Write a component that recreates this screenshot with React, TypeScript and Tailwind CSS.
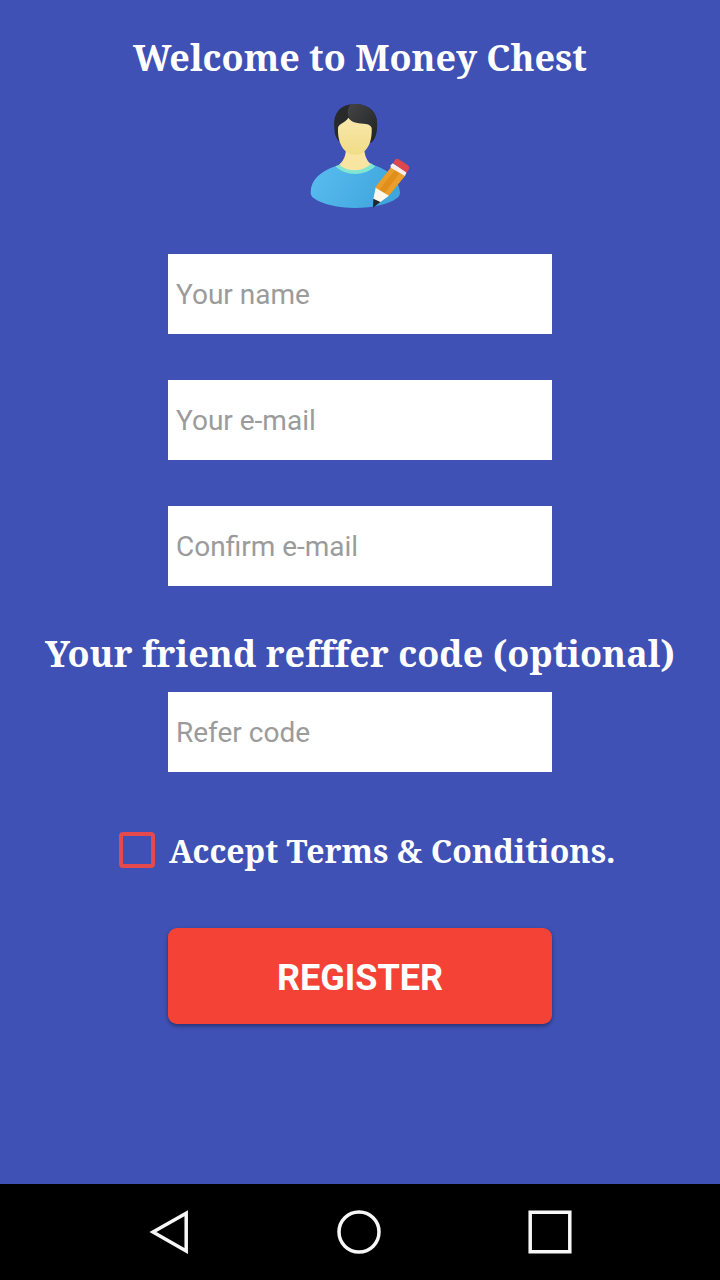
import { useState } from 'react';

const headingFont = "font-['Noto_Serif','DejaVu_Serif',serif] font-bold";

interface FieldProps {
  placeholder: string;
  type?: string;
}

function Field({ placeholder, type = 'text' }: FieldProps) {
  return (
    <input
      type={type}
      placeholder={placeholder}
      className="block w-96 h-20 shrink-0 bg-white px-2 pt-px text-[28px] text-gray-800 placeholder:text-[#9b9b9b] focus:outline-none"
    />
  );
}

function UserEditIcon() {
  return (
    <svg className="w-[100px] h-[108px] shrink-0" viewBox="60 36 300 324">
      <defs>
        <linearGradient id="shirt" x1="0" y1="0" x2="1" y2="0.3">
          <stop offset="0" stopColor="#5bbdf1" />
          <stop offset="1" stopColor="#3fa6dc" />
        </linearGradient>
        <linearGradient id="face" x1="0" y1="0" x2="0" y2="1">
          <stop offset="0" stopColor="#f9e8ad" />
          <stop offset="1" stopColor="#f1dc86" />
        </linearGradient>
        <linearGradient id="hair" x1="0" y1="0" x2="1" y2="1">
          <stop offset="0" stopColor="#444444" />
          <stop offset="1" stopColor="#222326" />
        </linearGradient>
      </defs>

      {/* Body */}
      <path d="M136 229 C92 244 62 270 62 308 Q62 318 72 325 C96 343 144 354 196 354 C248 354 296 343 320 325 Q330 318 330 308 C328 270 296 240 253 226 Z" fill="url(#shirt)" />
      <path d="M136 229 L147 224 C174 244 216 244 243 220 L256 229 C224 259 167 260 136 229 Z" fill="#80e5d1" />
      <path d="M168 180 C166 202 158 216 147 224 C174 247 216 247 243 222 C232 214 225 201 223 180 Z" fill="#f8e5a2" />

      {/* Head */}
      <path d="M133 112 C130 70 148 43 196 42 C244 43 265 73 261 109 C260 136 254 150 244 158 L146 153 C139 146 133 132 133 112 Z" fill="#28292b" />
      <path d="M181 43 C171 57 170 75 181 88 L247 151 C262 134 264 104 259 84 C248 51 214 38 181 43 Z" fill="url(#hair)" />
      <path d="M175 83 C188 101 208 99 228 102 C238 104 243 108 245 114 C247 160 229 194 195 194 C161 194 142 157 144 113 C147 100 167 98 175 83 Z" fill="url(#face)" />

      {/* Pencil */}
      <path d="M304 231 L345 257 L296 317 L255 293 Z" fill="#e08e1c" />
      <path d="M304 231 L316 239 L267 300 L255 293 Z" fill="#eb9d2c" />
      <path d="M331 247 L345 257 L296 317 L284 309 Z" fill="#ec9f28" />
      <path d="M257 293 L297 317 L270 337 L250 327 Z" fill="#fff7e8" />
      <path d="M250 326 L271 336 L249 353 Z" fill="#242629" />
      <path d="M302 226 L308 220 L350 246 L345 258 L302 233 Z" fill="#f7eeee" />
      <path d="M309 219 L315 209 Q319 205 325 207 L353 225 Q360 230 357 237 L350 248 Z" fill="#e0464e" />
    </svg>
  );
}

function NavigationBar() {
  return (
    <nav className="flex h-24 w-full shrink-0 items-center justify-between bg-black pl-[149px] pr-[148px] text-[#f7f7f7]">
      <button aria-label="Back">
        <svg className="block w-10 h-11" viewBox="0 0 40 44" fill="none" stroke="currentColor" strokeWidth="3.5">
          <path d="M37.2 3.2 V41 L4 22.1 Z" />
        </svg>
      </button>
      <button aria-label="Home">
        <svg className="block w-11 h-11" viewBox="0 0 44 44" fill="none" stroke="currentColor" strokeWidth="3.5">
          <circle cx="22" cy="22" r="20" />
        </svg>
      </button>
      <button aria-label="Recent apps">
        <svg className="block w-11 h-11" viewBox="0 0 44 44" fill="none" stroke="currentColor" strokeWidth="3.5">
          <path d="M2.2 2.2 H41.8 V41.8 H2.2 Z" />
        </svg>
      </button>
    </nav>
  );
}

export default function App() {
  const [accepted, setAccepted] = useState(false);

  return (
    <div className="flex h-[1280px] w-[720px] flex-col overflow-hidden bg-[#3f51b5] font-['Roboto',sans-serif]">
      <main className="flex flex-1 flex-col items-center pt-[34px]">
        <h1 className={`${headingFont} h-12 text-[36px] leading-[48px] whitespace-nowrap text-white`}>
          Welcome to Money Chest
        </h1>
        <div className="mt-5">
          <UserEditIcon />
        </div>

        {/* Account fields */}
        <div className="mt-11 flex flex-col gap-[46px]">
          <Field placeholder="Your name" />
          <Field placeholder="Your e-mail" type="email" />
          <Field placeholder="Confirm e-mail" type="email" />
        </div>

        {/* Referral */}
        <h2 className={`${headingFont} mt-11 mb-3.5 h-12 text-[36px] leading-[48px] tracking-[0.04px] whitespace-nowrap text-white`}>
          Your friend refffer code (optional)
        </h2>
        <Field placeholder="Refer code" />

        {/* Terms */}
        <label className="mt-15 flex h-9 w-full items-center gap-3.5 pl-[119px]">
          <input
            type="checkbox"
            checked={accepted}
            onChange={(e) => setAccepted(e.target.checked)}
            className="size-9 shrink-0 appearance-none rounded-[4px] border-4 border-[#e5484d] checked:bg-[#e5484d]"
          />
          <span className={`${headingFont} pt-0.5 text-[32px] leading-9 tracking-[0.03px] whitespace-nowrap text-white`}>
            Accept Terms &amp; Conditions.
          </span>
        </label>

        <button className="mt-15 h-24 w-96 shrink-0 rounded-[9px] bg-[#f44336] pt-1 text-[36px] font-bold text-white shadow-[0_2px_4px_rgba(0,0,0,0.4)]">
          REGISTER
        </button>
      </main>
      <NavigationBar />
    </div>
  );
}
